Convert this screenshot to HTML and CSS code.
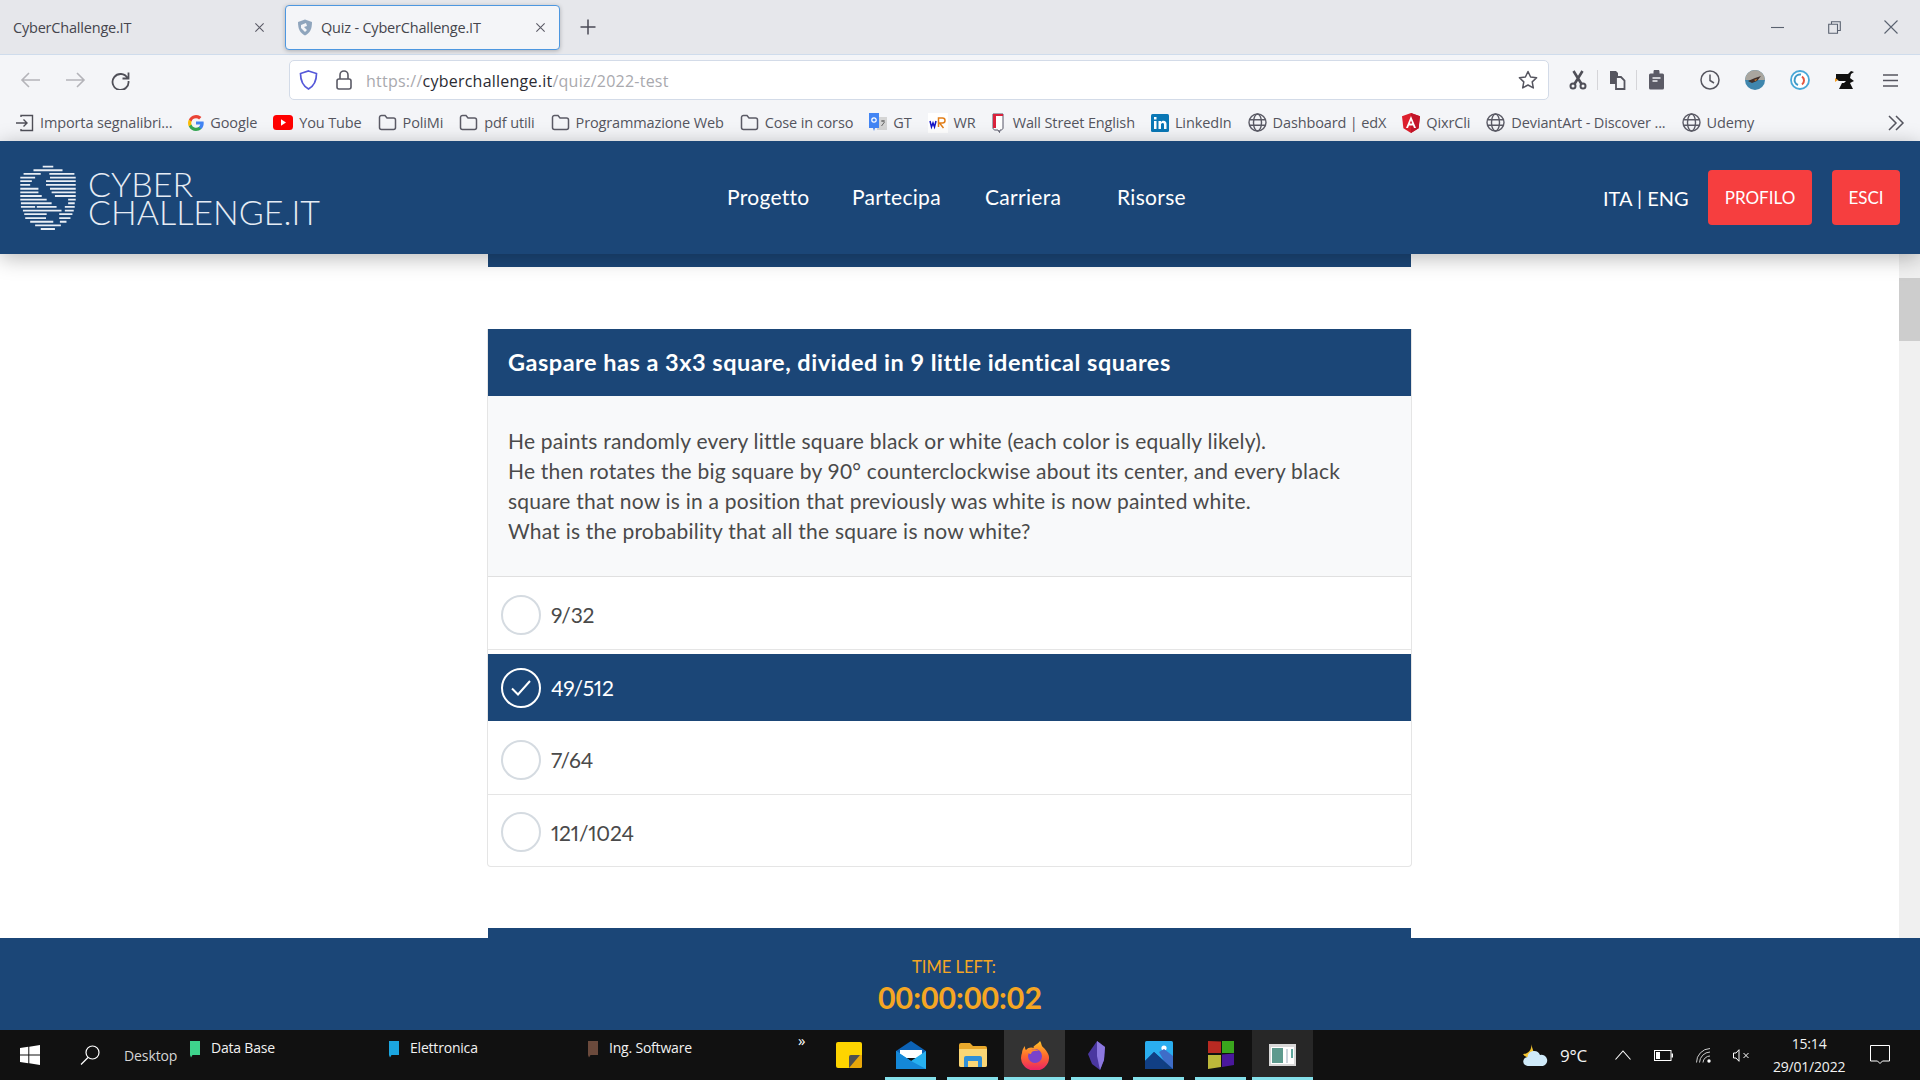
FILE: index.html
```html
<!DOCTYPE html>
<html lang="it">
<head>
<meta charset="utf-8">
<title>Quiz - CyberChallenge.IT</title>
<link rel="stylesheet" href="styles.css">
</head>
<body>
<svg class="sprite" xmlns="http://www.w3.org/2000/svg">
  <symbol id="folder" viewBox="0 0 19 17"><path d="M1.5 3.5a2 2 0 0 1 2-2h3.5l2 2.5h6.5a2 2 0 0 1 2 2v7.5a2 2 0 0 1-2 2h-12a2 2 0 0 1-2-2z" fill="none" stroke="#5b5b66" stroke-width="1.5"/></symbol>
  <symbol id="globe" viewBox="0 0 19 19"><g fill="none" stroke="#5b5b66" stroke-width="1.4"><circle cx="9.5" cy="9.5" r="8.5"/><ellipse cx="9.5" cy="9.5" rx="4" ry="8.5"/><path d="M1.3 6.8h16.4M1.3 12.2h16.4"/></g></symbol>
  <symbol id="x" viewBox="0 0 12 12"><path d="M1.5 1.5l9 9M10.5 1.5l-9 9" fill="none" stroke="#5b5b66" stroke-width="1.2"/></symbol>
  <symbol id="flag" viewBox="0 0 12 17"><path d="M1 0h10v14H3.500L2 16.500 1 14z" fill="currentColor"/></symbol>
</svg>

<header class="browser">
  <div class="tabbar">
    <div class="tab">
      <span>CyberChallenge.IT</span>
      <svg class="tab-x" width="11" height="11"><use href="#x"/></svg>
    </div>
    <div class="tab tab-active">
      <svg class="favicon" width="16" height="17" viewBox="0 0 16 17"><path d="M8 .5l7 2.500c0 7-2 11-7 13.500C3 14 1 10 1 3z" fill="#8fa5bd"/><path d="M4 6l5-2 1 3-3 1 3 3-2 2-4-4z" fill="#f4f5f8"/></svg>
      <span>Quiz - CyberChallenge.IT</span>
      <svg class="tab-x" width="11" height="11"><use href="#x"/></svg>
    </div>
    <svg class="tab-plus" width="16" height="16" viewBox="0 0 16 16"><path d="M8 .5v15M.5 8h15" stroke="#4a4a55" stroke-width="1.500"/></svg>
    <div class="winctl">
      <svg width="13" height="13" viewBox="0 0 13 13"><path d="M0 6.500h13" stroke="#5a6270" stroke-width="1.100"/></svg>
      <svg width="13" height="13" viewBox="0 0 13 13"><path d="M3.500 3V.7h8.800v8.800H10M.7 3.300h8.800v9H.7z" fill="none" stroke="#5a6270" stroke-width="1.100"/></svg>
      <svg width="14" height="14" viewBox="0 0 14 14"><path d="M.5.5l13 13M13.500.5l-13 13" stroke="#5a6270" stroke-width="1.100"/></svg>
    </div>
  </div>

  <div class="toolbar">
    <div class="tb-nav">
      <svg width="45" height="20" viewBox="0 0 45 20"><path d="M32 10H14M21 3l-7 7 7 7" fill="none" stroke="#b4b4b9" stroke-width="1.600"/></svg>
      <svg width="45" height="20" viewBox="0 0 45 20"><path d="M13 10h18M24 3l7 7-7 7" fill="none" stroke="#b4b4b9" stroke-width="1.600"/></svg>
      <svg width="45" height="20" viewBox="0 0 45 20"><path d="M29.500 8A8 8 0 1 0 30.500 11M30.500 2.500V8.500H24.500" fill="none" stroke="#4f4f58" stroke-width="1.800"/></svg>
    </div>
    <div class="urlbar">
      <svg class="u-shield" width="19" height="20" viewBox="0 0 19 20"><path d="M9.500 1l8 2.500c0 8-2.500 12.500-8 15.500-5.500-3-8-7.500-8-15.500z" fill="none" stroke="#5558d9" stroke-width="1.700"/></svg>
      <svg class="u-lock" width="16" height="20" viewBox="0 0 16 20"><g fill="none" stroke="#5b5b66" stroke-width="1.600"><rect x="1" y="9" width="14" height="10" rx="2"/><path d="M4 9V5a4 4 0 0 1 8 0v4"/></g></svg>
      <span class="url"><span class="url-dim">https://</span>cyberchallenge.it<span class="url-dim">/quiz/2022-test</span></span>
      <svg class="u-star" width="20" height="20" viewBox="0 0 20 20"><path d="M10 1.500l2.600 5.500 6 .8-4.400 4.100 1.100 6L10 15l-5.300 2.900 1.100-6L1.400 7.800l6-.8z" fill="none" stroke="#55555f" stroke-width="1.500" stroke-linejoin="round"/></svg>
    </div>
    <div class="tb-tools">
      <div class="tool tool-sep"><svg width="18" height="20" viewBox="0 0 18 20"><g fill="none" stroke="#4f4f58" stroke-width="2"><circle cx="4" cy="16" r="2.500"/><circle cx="14" cy="16" r="2.500"/><path d="M5.500 14L13.500 1M12.500 14L4.500 1" stroke-width="2.600"/></g></svg></div>
      <div class="tool tool-sep"><svg width="18" height="20" viewBox="0 0 18 20"><path d="M2 1h6l2 2v5h-1.500v6H2z" fill="#55555f"/><path d="M8 7h5l3.500 3.500V19H8z" fill="#f4f5f8" stroke="#55555f" stroke-width="1.800"/></svg></div>
      <div class="tool"><svg width="15" height="20" viewBox="0 0 15 20"><path d="M1.500 3.500h3V2a3 3 0 0 1 6 0v1.500h3a1.500 1.500 0 0 1 1.500 1.500v13a1.500 1.500 0 0 1-1.500 1.500h-12A1.500 1.500 0 0 1 0 18V5a1.500 1.500 0 0 1 1.500-1.500z" fill="#5b5b66"/><path d="M3.500 8h8M3.500 11h5" stroke="#f4f5f8" stroke-width="1.300"/></svg></div>
      <div class="tool tool-gap"><svg width="20" height="20" viewBox="0 0 20 20"><g fill="none" stroke="#55555f" stroke-width="1.500"><circle cx="10" cy="10" r="9"/><path d="M10 4.500V10.500L14 13"/></g></svg></div>
      <div class="tool"><svg width="20" height="20" viewBox="0 0 20 20"><circle cx="10" cy="10" r="10" fill="#3f86ad"/><path d="M0 10a10 10 0 0 1 20 0z" fill="#a9a69f"/><path d="M3 11l7-3 6-2-4 5-5 2z" fill="#40302c"/><path d="M9 10l3-1-1 2z" fill="#e08a2e"/></svg></div>
      <div class="tool"><svg width="20" height="20" viewBox="0 0 20 20"><circle cx="10" cy="10" r="9" fill="#fff" stroke="#49a8d8" stroke-width="1.800"/><path d="M11 4.500A5.500 5.500 0 0 0 8 15" fill="none" stroke="#3f9ac8" stroke-width="2"/><path d="M12 6.500A5 5 0 0 1 12 14.500" fill="none" stroke="#e4573f" stroke-width="2"/></svg></div>
      <div class="tool"><svg width="22" height="22" viewBox="0 0 22 22"><path d="M2 5h12l3-3 3 1-3 2-1 4 4 3-2 1-2 1 3 6H5l3-6-6-4z" fill="#111"/><path d="M1 9l3 2-3 2z" fill="#f39a1e"/><path d="M4 12h8l-2 2H5z" fill="#f4f5f8"/></svg></div>
      <div class="tool"><svg width="15" height="13" viewBox="0 0 15 13"><path d="M0 1h15M0 6.500h15M0 12h15" stroke="#55555f" stroke-width="1.500"/></svg></div>
    </div>
  </div>

  <nav class="bookmarks">
    <a class="bm"><svg width="18" height="18" viewBox="0 0 18 18"><path d="M5 3V1.500h11.500v15H5V15M0 9h11M7.500 5.500L11 9l-3.500 3.500" fill="none" stroke="#4f4f58" stroke-width="1.400"/></svg>Importa segnalibri...</a>
    <a class="bm"><svg width="16" height="16" viewBox="0 0 16 16"><path d="M15.700 8.200c0-.6-.05-1.100-.15-1.600H8v3h4.300a3.700 3.700 0 0 1-1.600 2.400v2h2.600c1.500-1.400 2.400-3.400 2.400-5.800z" fill="#4285f4"/><path d="M8 16c2.200 0 4-.7 5.300-2l-2.600-2a4.800 4.800 0 0 1-7.200-2.500H.9v2A8 8 0 0 0 8 16z" fill="#34a853"/><path d="M3.500 9.500a4.800 4.800 0 0 1 0-3v-2H.9a8 8 0 0 0 0 7.100z" fill="#fbbc05"/><path d="M8 3.200c1.200 0 2.300.4 3.100 1.200l2.300-2.300A8 8 0 0 0 .9 4.500l2.600 2A4.800 4.800 0 0 1 8 3.200z" fill="#ea4335"/></svg>Google</a>
    <a class="bm"><svg width="20" height="15" viewBox="0 0 20 15"><rect width="20" height="15" rx="3.500" fill="#f00"/><path d="M8 4.300l5 3.200-5 3.200z" fill="#fff"/></svg>You Tube</a>
    <a class="bm"><svg width="19" height="17"><use href="#folder"/></svg>PoliMi</a>
    <a class="bm"><svg width="19" height="17"><use href="#folder"/></svg>pdf utili</a>
    <a class="bm"><svg width="19" height="17"><use href="#folder"/></svg>Programmazione Web</a>
    <a class="bm"><svg width="19" height="17"><use href="#folder"/></svg>Cose in corso</a>
    <a class="bm"><svg width="18" height="19" viewBox="0 0 18 19"><rect x="8" y="4" width="10" height="13" fill="#d5d5d5"/><path d="M0 0h10v15H6l-1 3-1-3H0z" fill="#4285f4"/><path d="M12 8h4M14 7v2M12.500 13l3-4" stroke="#666" stroke-width="1"/><circle cx="5" cy="7" r="2.200" fill="none" stroke="#fff" stroke-width="1.200"/></svg>GT</a>
    <a class="bm"><svg width="20" height="20" viewBox="0 0 20 20"><rect width="20" height="20" fill="#fff"/><path d="M2 8l1.500 6 1.500-4 1.500 4L8 8" fill="none" stroke="#1414c8" stroke-width="1.500"/><path d="M10.500 14V5h4a2 2 0 0 1 0 5h-3l4 5" fill="none" stroke="#e27f1a" stroke-width="1.500"/></svg>WR</a>
    <a class="bm bm-wall"><svg width="12" height="20" viewBox="0 0 12 20"><path d="M1 1h10v14c0 1-1 2-2 2H8l-.5 2.500L6 17H3c-1 0-2-1-2-2z" fill="#fff" stroke="#556" stroke-width="1"/><path d="M1 1h10v2H4v12H1z" fill="#d9223c"/></svg>Wall Street English</a>
    <a class="bm"><svg width="18" height="18" viewBox="0 0 18 18"><rect width="18" height="18" rx="1.500" fill="#0a77b5"/><path d="M3 7h2.500v8H3zM3 3h2.500v2.500H3zM7.500 7H10v1.200c.6-1 1.500-1.400 2.500-1.400 2 0 3 1.300 3 3.500V15H13v-4.200c0-1.200-.5-1.800-1.400-1.800S10 9.700 10 10.800V15H7.500z" fill="#fff"/></svg>LinkedIn</a>
    <a class="bm"><svg width="19" height="19"><use href="#globe"/></svg>Dashboard | edX</a>
    <a class="bm"><svg width="18" height="20" viewBox="0 0 18 20"><path d="M9 0l9 3.200-1.400 12L9 20l-7.600-4.800L0 3.200z" fill="#dd1f2d"/><path d="M9 0l9 3.200-1.400 12L9 20z" fill="#c3152a"/><path d="M9 3L4 15h2l1-2.600h4L12 15h2zM7.800 10.600L9 7.500l1.200 3.100z" fill="#fff"/></svg>QixrCli</a>
    <a class="bm"><svg width="19" height="19"><use href="#globe"/></svg>DeviantArt - Discover ...</a>
    <a class="bm"><svg width="19" height="19"><use href="#globe"/></svg>Udemy</a>
    <svg class="bm-more" width="17" height="16" viewBox="0 0 17 16"><path d="M1 1l7 7-7 7M8 1l7 7-7 7" fill="none" stroke="#55555f" stroke-width="1.500"/></svg>
  </nav>
</header>

<div class="sitenav">
  <div class="logo">
    <svg class="logo-mark" width="62" height="66" viewBox="58 72 172 200" stroke="#e9eef5" stroke-width="5.500">
      <path d="M128 77h32M100 88h88M70 99h52M148 99h76M60 110h45M150 110h78M60 121h35M138 121h90M60 132h30M138 132h90M60 144h55M150 144h78M60 155h55M155 155h73M60 166h65M165 166h63M60 177h80M205 177h23M62 188h93M205 188h20M62 199h43M110 199h60M195 199h30M68 210h42M110 210h75M195 210h27M72 221h68M178 221h40M75 233h63M178 233h34M90 244h70M180 244h20M105 255h78M122 266h43"/>
    </svg>
    <div class="logo-text"><span>CYBER</span><span>CHALLENGE.IT</span></div>
  </div>
  <div class="menu">
    <a>Progetto</a><a>Partecipa</a><a>Carriera</a><a>Risorse</a>
  </div>
  <div class="lang">ITA | ENG</div>
  <a class="btn btn-profilo">PROFILO</a>
  <a class="btn btn-esci">ESCI</a>
</div>

<main class="main">
  <div class="page">
    <div class="q-sliver"></div>
    <section class="card">
      <h2 class="q-head">Gaspare has a 3x3 square, divided in 9 little identical squares</h2>
      <div class="q-body">
        <p>He paints randomly every little square black or white (each color is equally likely).</p>
        <p>He then rotates the big square by 90° counterclockwise about its center, and every black</p>
        <p>square that now is in a position that previously was white is now painted white.</p>
        <p>What is the probability that all the square is now white?</p>
      </div>
      <div class="opt"><span class="radio"></span><span>9/32</span></div>
      <div class="opt opt-sel"><span class="radio radio-on"><svg width="22" height="18" viewBox="0 0 22 18"><path d="M2 9.500l6 6L20 2" fill="none" stroke="#fff" stroke-width="2"/></svg></span><span>49/512</span></div>
      <div class="opt"><span class="radio"></span><span>7/64</span></div>
      <div class="opt opt-last"><span class="radio"></span><span>121/1024</span></div>
    </section>
    <div class="q-next"></div>
  </div>
  <aside class="scrollbar"><div class="thumb"></div></aside>
</main>

<div class="timebar">
  <div class="time-label">TIME LEFT:</div>
  <div class="time-value">00:00:00:02</div>
</div>

<footer class="taskbar">
  <svg class="tk-win" width="20" height="20" viewBox="0 0 20 20"><path d="M0 3l8.300-1.200v7.700H0zM9.300 1.700L20 0v9.500H9.300zM0 10.500h8.300v7.700L0 17zM9.300 10.500H20V20L9.300 18.300z" fill="#fff"/></svg>
  <svg class="tk-search" width="20" height="20" viewBox="0 0 20 20"><circle cx="12.500" cy="7.500" r="6.500" fill="none" stroke="#fff" stroke-width="1.200"/><path d="M8 12.500L1 19.500" stroke="#fff" stroke-width="1.300"/></svg>
  <span class="tk-desktop">Desktop</span>
  <div class="tk-folder tk-f1"><svg class="c-green" width="12" height="17"><use href="#flag"/></svg><span>Data Base</span></div>
  <div class="tk-folder tk-f2"><svg class="c-blue" width="12" height="17"><use href="#flag"/></svg><span>Elettronica</span></div>
  <div class="tk-folder tk-f3"><svg class="c-brown" width="12" height="17"><use href="#flag"/></svg><span>Ing. Software</span></div>
  <span class="tk-more">»</span>

  <div class="apps">
    <div class="app"><svg width="26" height="26" viewBox="0 0 26 26"><rect width="26" height="26" rx="2" fill="#fed400"/><path d="M13 26V15a2 2 0 0 1 2-2h11v11a2 2 0 0 1-2 2z" fill="#e9a70a"/><path d="M13 26V15a2 2 0 0 1 2-2h9z" fill="#4f4f4f"/></svg></div>
    <div class="app app-on"><svg width="30" height="28" viewBox="0 0 30 28"><path d="M0 10L15 0l15 10v4H0z" fill="#0c62b5"/><path d="M4 9h22v8H4z" fill="#fff"/><path d="M0 10l15 10 15-10v18H0z" fill="#27b0ef"/><path d="M0 28V10l15 10 15 8z" fill="#1488d8"/></svg></div>
    <div class="app app-on"><svg width="28" height="24" viewBox="0 0 28 24"><path d="M0 2a2 2 0 0 1 2-2h9l3 3h12a2 2 0 0 1 2 2v17a2 2 0 0 1-2 2H2a2 2 0 0 1-2-2z" fill="#e9a92c"/><path d="M0 6h28v16a2 2 0 0 1-2 2H2a2 2 0 0 1-2-2z" fill="#fad675"/><path d="M5 24V15a2 2 0 0 1 2-2h14a2 2 0 0 1 2 2v9h-4v-6H9v6z" fill="#2f8fd8"/></svg></div>
    <div class="app app-on app-hi"><svg width="28" height="29" viewBox="0 0 28 29"><defs><linearGradient id="ffa" x1="0" y1="0" x2="0" y2="1"><stop offset="0" stop-color="#ffc428"/><stop offset=".5" stop-color="#ff6a2c"/><stop offset="1" stop-color="#ea1f6a"/></linearGradient></defs><path d="M19 0c2 3 1 5 4 7 3 3 5 7 5 9a14 13 0 1 1-27-4c0-2 1-5 3-7 0 2 0 3 1 4 2-3 6-3 8-2-2-2 3-3 6-7z" fill="url(#ffa)"/><circle cx="14" cy="15" r="7" fill="#7b43cb"/><path d="M7 11c2-3 7-4 11-1-4-1-8 0-8 3-2 0-3-1-3-2z" fill="#ff8a2c"/></svg></div>
    <div class="app app-on"><svg width="18" height="29" viewBox="0 0 18 29"><path d="M9 0l8 6-1 13-4 10-8-6L0 13z" fill="#4a37a0"/><path d="M9 0l8 6-1 13-4 10-3-14z" fill="#8c78df"/></svg></div>
    <div class="app app-on"><svg width="28" height="28" viewBox="0 0 28 28"><rect width="28" height="28" rx="1.500" fill="#2aaef0"/><circle cx="19" cy="7" r="2.600" fill="#fff"/><path d="M0 20l9-9 10 9 3-3 6 5v6H0z" fill="#103f80"/><path d="M14 11l5-3 9 7v13l-9-8z" fill="#3e6dc8"/><path d="M0 20l9-9 10 9v8H0z" fill="#113f84"/></svg></div>
    <div class="app app-on"><svg width="27" height="30" viewBox="0 0 27 30"><path d="M1 1l13 .5V13H1z" fill="#b92a22"/><path d="M15 1h12v12H15z" fill="#3aa61d"/><path d="M1 15h13v12L1 29z" fill="#bcb83a"/><path d="M15 14.500l12-1V25l-12 2z" fill="#4a189c"/></svg></div>
    <div class="app app-on app-hi2"><svg width="27" height="22" viewBox="0 0 27 22"><rect width="27" height="22" fill="#d8d8d8"/><rect x="2" y="3" width="23" height="17" fill="#fff"/><rect x="3" y="4" width="11" height="15" fill="#5d9a8e"/><path d="M18 5v14" stroke="#9ab" stroke-width="1"/><rect x="22" y="5" width="2" height="9" fill="#5fa79d"/></svg></div>
  </div>

  <div class="tray">
    <svg class="t-weather" width="28" height="25" viewBox="0 0 28 25"><path d="M10 1a8 8 0 0 1-8 10 8 8 0 0 0 12 2z" fill="#f4c430"/><path d="M7 23a4.500 4.500 0 0 1-.500-9 6.500 6.500 0 0 1 12.500-2 5.500 5.500 0 0 1 3 11z" fill="#cfeaf9"/></svg>
    <span class="t-temp">9°C</span>
    <svg class="t-caret" width="16" height="10" viewBox="0 0 16 10"><path d="M.5 9.500L8 1l7.500 8.500" fill="none" stroke="#fff" stroke-width="1.100"/></svg>
    <svg class="t-batt" width="19" height="11" viewBox="0 0 19 11"><rect x=".5" y=".5" width="16.500" height="10" fill="none" stroke="#fff"/><rect x="2" y="2" width="4" height="7" fill="#fff"/><rect x="17.500" y="3.500" width="1.500" height="4" fill="#fff"/></svg>
    <svg class="t-wifi" width="16" height="15" viewBox="0 0 16 15"><g fill="none" stroke="#ccc"><path d="M.5 14.500A14 14 0 0 1 14 .5"/><path d="M3.500 14.500A11 11 0 0 1 14 4"/><path d="M7 14.500A7 7 0 0 1 14 8"/></g><circle cx="13" cy="13" r="1.700" fill="#fff"/></svg>
    <svg class="t-vol" width="18" height="13" viewBox="0 0 18 13"><path d="M.5 4h2.500L6 .7v11.600L3 9H.5z" fill="none" stroke="#fff"/><path d="M10.500 4l5 5M15.500 4l-5 5" stroke="#fff"/></svg>
    <div class="t-clock"><span>15:14</span><span>29/01/2022</span></div>
    <svg class="t-note" width="20" height="20" viewBox="0 0 20 20"><path d="M.5.500h19v15.500h-7l-2.500 2.500-2.500-2.500h-7z" fill="none" stroke="#fff"/></svg>
  </div>
</footer>
</body>
</html>
```

FILE: styles.css
```css
* { box-sizing: border-box; }
html, body { margin: 0; padding: 0; height: 100%; }
body {
  width: 1920px;
  height: 1080px;
  overflow: hidden;
  display: flex;
  flex-direction: column;
  background: #fff;
  font-family: "Open Sans", "Noto Sans", sans-serif;
}
.sprite { display: none; }
svg { display: block; flex: none; }

/* browser chrome */
.browser { flex: none; background: #f4f5f8; color: #45454d; }
.tabbar {
  height: 55px;
  background: #e6e7eb;
  border-bottom: 1px solid #cfdcec;
  display: flex;
  align-items: center;
  font-size: 14.500px;
  letter-spacing: -.2px;
}
.tab {
  width: 285px;
  height: 45px;
  margin-top: 1px;
  padding: 0 20px 0 13px;
  display: flex;
  align-items: center;
}
.tab-x { margin-left: auto; }
.tab-active {
  width: 275px;
  padding: 0 13px 0 11px;
  background: #f4f5f8;
  border: 1px solid #4d97e0;
  border-radius: 4px;
  box-shadow: 0 1px 4px rgba(0,0,0,.25);
}
.favicon { margin-right: 8px; }
.tab-plus { margin-left: 20px; }
.winctl {
  margin-left: auto;
  width: 149px;
  padding: 0 22px 0 0;
  display: flex;
  align-items: center;
  justify-content: space-between;
}

.toolbar { height: 49px; display: flex; align-items: flex-start; padding-top: 5px; }
.tb-nav { display: flex; padding: 10px 0 0 8px; width: 289px; }
.urlbar {
  width: 1260px;
  height: 40px;
  background: #fff;
  border: 1px solid #d3dbe8;
  border-radius: 5px;
  display: flex;
  align-items: center;
  padding: 0 10px 0 9px;
}
.u-lock { margin-left: 18px; }
.url { margin: 2px 0 0 14px; font-size: 16px; color: #2b2b33; letter-spacing: .24px; }
.url-dim { color: #a9a9ae; }
.u-star { margin-left: auto; }
.tb-tools { display: flex; gap: 5px; margin-left: 9px; height: 40px; }
.tool { width: 40px; height: 40px; display: flex; align-items: center; justify-content: center; }
.tool-sep { margin-right: -6px; position: relative; }
.tool-sep::after {
  content: "";
  position: absolute;
  right: 0;
  top: 10px;
  height: 20px;
  border-right: 1px solid #d5d5d9;
}
.tool-gap { margin-left: 9px; }

.bookmarks {
  height: 37px;
  display: flex;
  align-items: center;
  gap: 16px;
  padding: 0 15px 0 16px;
  font-size: 14.500px;
  letter-spacing: -.13px;
  color: #55555f;
  white-space: nowrap;
}
.bm { display: flex; align-items: center; gap: 6px; }
.bm-wall { gap: 9px; }
.bm-more { margin-left: auto; }

/* site nav */
.sitenav {
  flex: none;
  height: 113px;
  background: #1b4677;
  position: relative;
  z-index: 2;
  box-shadow: 0 4px 20px rgba(0,0,0,.28);
  display: flex;
  align-items: center;
  color: #fff;
  padding: 0 20px 0 17px;
  font-family: Lato, "Noto Sans", sans-serif;
}
.logo { display: flex; align-items: center; gap: 9px; width: 710px; }
.logo-text {
  display: flex;
  flex-direction: column;
  font-weight: 300;
  font-size: 34px;
  line-height: 28px;
  color: #e6ecf4;
}
.menu {
  display: grid;
  grid-template-columns: 125px 133px 132px 100px;
  font-size: 21px;
  letter-spacing: .3px;
  width: 876px;
  margin-top: -2px;
}
.lang { font-size: 20px; width: 105px; }
.btn {
  height: 55px;
  background: #f63e3f;
  border-radius: 4px;
  display: flex;
  align-items: center;
  justify-content: center;
  font-size: 17px;
}
.btn-profilo { width: 104px; margin-right: 20px; }
.btn-esci { width: 68px; }

/* page */
.main { flex: 1; min-height: 0; display: flex; overflow: hidden; font-family: Lato, "Noto Sans", sans-serif; color: #4a4a4a; }
.page { flex: 1; display: flex; flex-direction: column; align-items: center; }
.q-sliver { flex: none; width: 923px; height: 13px; background: #1b4677; }
.card {
  flex: none;
  width: 925px;
  margin-top: 62px;
  border: 1px solid #e5e5e5;
  border-top: 0;
  border-radius: 0 0 4px 4px;
}
.q-head {
  margin: 0;
  height: 67px;
  padding: 0 0 2px 20px;
  display: flex;
  align-items: center;
  background: #1b4677;
  color: #fff;
  font-size: 23.500px;
  font-weight: 700;
  letter-spacing: .5px;
}
.q-body {
  height: 181px;
  padding: 30px 20px 0 20px;
  background: #f8f9fa;
  border-bottom: 1px solid #e0e0e0;
  font-size: 21px;
  line-height: 30px;
  letter-spacing: .22px;
}
.q-body p { margin: 0; }
.opt {
  height: 73px;
  padding: 3px 0 0 13px;
  display: flex;
  align-items: center;
  gap: 10px;
  font-size: 21px;
  letter-spacing: -.2px;
  font-variant-numeric: proportional-nums;
  border-bottom: 1px solid #e5e5e5;
}
.opt-sel { height: 67px; margin: 4px 0 1px; padding-top: 0; background: #1b4677; color: #fff; border-bottom: 0; }
.opt-last { border-bottom: 0; height: 71px; padding-top: 3px; }
.radio {
  width: 40px;
  height: 40px;
  flex: none;
  border: 2px solid #d5dbe1;
  border-radius: 50%;
  display: flex;
  align-items: center;
  justify-content: center;
}
.radio-on { border-color: #fff; }
.q-next { flex: none; width: 923px; height: 20px; margin-top: 61px; background: #1b4677; }
.scrollbar { flex: none; width: 21px; background: #f0f0f0; padding-top: 24px; }
.thumb { height: 63px; background: #cdcdcd; }

/* time */
.timebar {
  flex: none;
  height: 92px;
  background: #1b4677;
  display: flex;
  flex-direction: column;
  align-items: center;
  padding-top: 19px;
  font-family: Lato, "Noto Sans", sans-serif;
  color: #f5a623;
}
.time-label { font-size: 16.500px; line-height: 21px; padding-right: 12px; }
.time-value { font-size: 30.300px; font-weight: 700; line-height: 38px; }

/* taskbar */
.taskbar {
  flex: none;
  height: 50px;
  background: #111;
  color: #f2f2f2;
  display: flex;
  align-items: center;
  font-family: "Open Sans", "Noto Sans", sans-serif;
  font-size: 14px;
  letter-spacing: -.2px;
  padding-left: 20px;
}
.tk-search { margin-left: 40px; }
.tk-desktop { margin: 1px 0 0 24px; width: 65px; color: #d5d5d5; letter-spacing: -.1px; }
.tk-folder { display: flex; gap: 10px; margin-top: -11px; width: 199px; }
.tk-f3 { width: 204px; }
.tk-folder span { margin-top: -3px; }
.c-green { color: #3ed48c; }
.c-blue { color: #1ba6e0; }
.c-brown { color: #6b4a3c; }
.tk-more { font-size: 15px; margin: -30px 0 0 7px; width: 22px; color: #fff; }
.apps { display: flex; margin-left: 3px; height: 50px; }
.app {
  width: 51px;
  display: flex;
  align-items: center;
  justify-content: center;
  border-bottom: 3px solid transparent;
  margin-right: 11px;
  padding-top: 3px;
}
.app-on { border-bottom-color: #84e0ea; }
.app-hi { width: 61px; background: #333; margin-left: -5px; margin-right: 6px; }
.app-hi2 { width: 61px; background: #272727; margin-left: -5px; margin-right: 10px; }
.tray { margin-left: 198px; display: flex; align-items: center; height: 50px; }
.t-temp { font-size: 17px; margin-left: 11px; }
.t-caret { margin-left: 28px; }
.t-batt { margin-left: 23px; }
.t-wifi { margin-left: 23px; }
.t-vol { margin-left: 21px; }
.t-clock {
  width: 76px;
  margin-left: 20px;
  display: flex;
  flex-direction: column;
  align-items: center;
  line-height: 23px;
  font-size: 14px;
  white-space: nowrap;
}
.t-note { margin-left: 23px; }
```
